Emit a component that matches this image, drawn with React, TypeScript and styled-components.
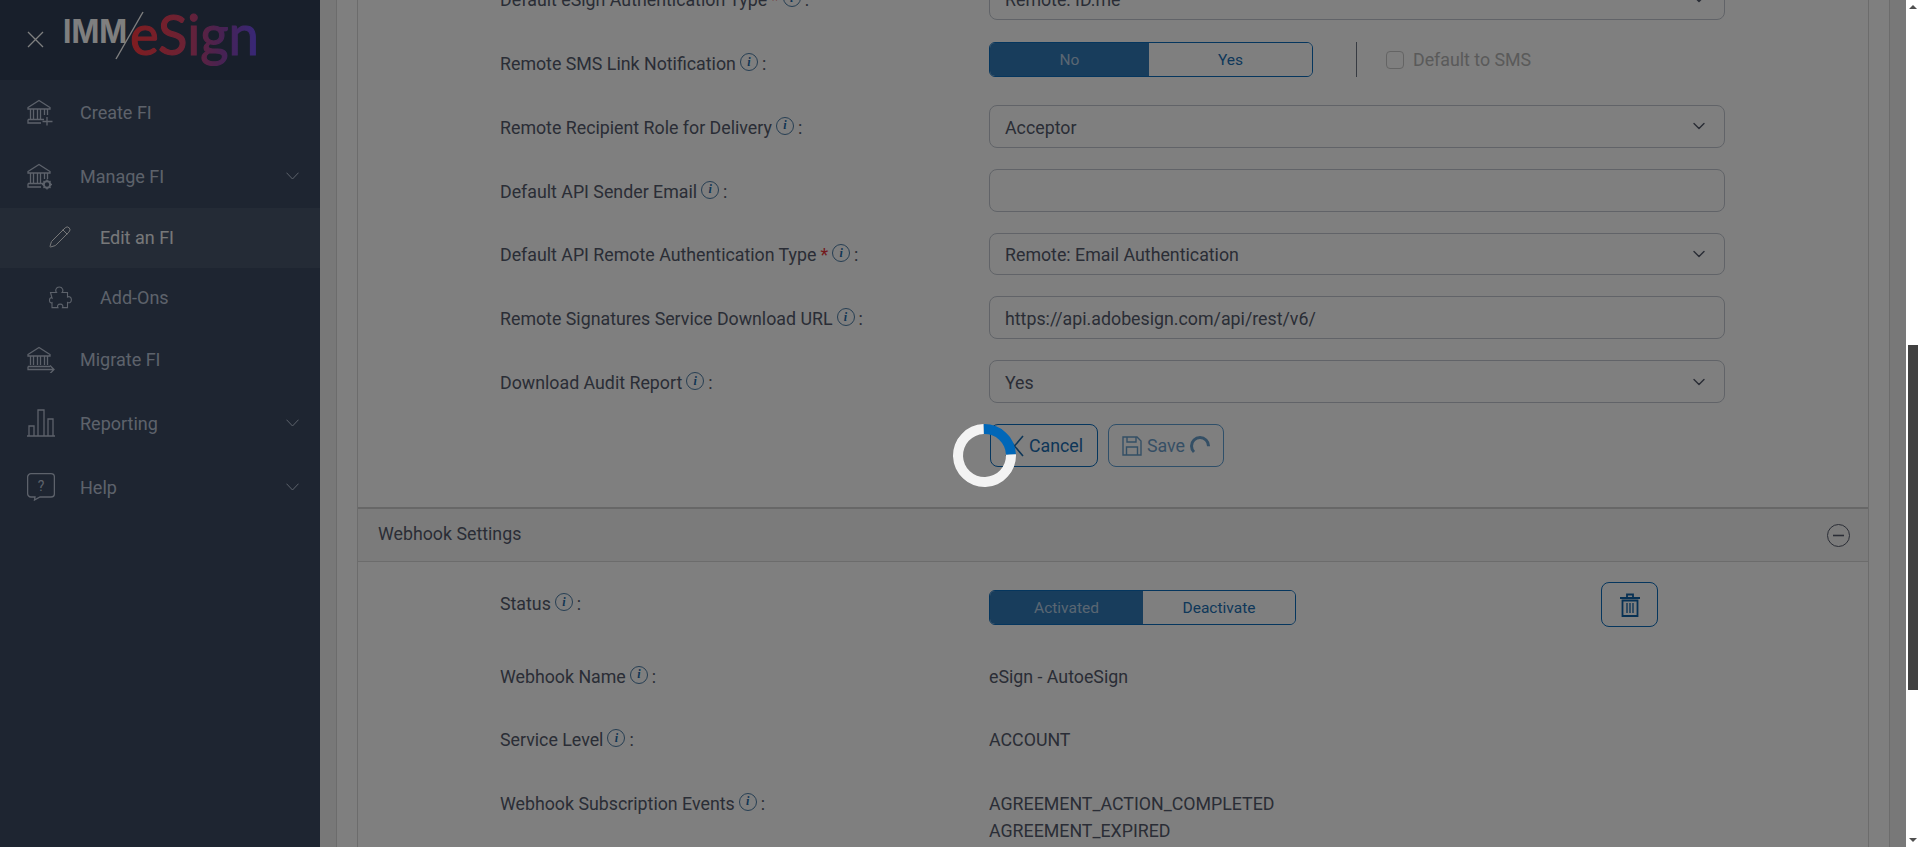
import React from "react";
import styled, { createGlobalStyle } from "styled-components";
import { ChevronDown, Pencil } from "lucide-react";

const GlobalStyle = createGlobalStyle`
  html, body {
    margin: 0;
    height: 100%;
    overflow: hidden;
    background: #fff;
    font-family: Roboto, "Liberation Sans", sans-serif;
  }
`;

const Page = styled.div`
  position: relative;
  display: flex;
  height: 847px;
  overflow: hidden;
`;

const Overlay = styled.div`
  position: absolute;
  inset: 0 14px 0 0;
  background: rgba(0, 0, 0, 0.5);
`;

const Loader = styled.div`
  position: absolute;
  left: 953px;
  top: 424px;
  width: 63px;
  height: 63px;
  box-sizing: border-box;
  border: 10px solid #f3f3f3;
  border-top-color: #0067b8;
  border-radius: 50%;
  transform: rotate(43deg);
`;

/* sidebar */
const Sidebar = styled.nav`
  flex: 0 0 320px;
  background: #3c4a62;
  color: #bac4d6;
  font-size: 18px;
`;

const Brand = styled.div`
  display: flex;
  align-items: center;
  gap: 19px;
  height: 80px;
  padding-left: 27px;
  background: #303f57;
  color: #fff;
`;

const CloseWrap = styled.span`
  display: flex;
  margin-bottom: 2px;
`;

const NavItem = styled.div<{ $sub?: boolean; $selected?: boolean; $height: number }>`
  display: flex;
  align-items: center;
  box-sizing: border-box;
  height: ${(p) => p.$height}px;
  padding: 0 21px ${(p) => (p.$selected ? 2 : 0)}px ${(p) => (p.$sub ? 49 : 27)}px;
  background: ${(p) => (p.$selected ? "#48566c" : "transparent")};
  color: ${(p) => (p.$selected ? "#eef0f3" : "inherit")};
`;

const NavIcon = styled.span<{ $sub?: boolean }>`
  display: flex;
  width: ${(p) => (p.$sub ? 51 : 53)}px;
`;

const NavLabel = styled.span`
  flex: 1;
`;

/* content */
const Main = styled.main`
  flex: 1;
  min-width: 0;
  padding: 0 16px;
  background: #f0f0f0;
`;

const Outer = styled.div`
  height: 100%;
  padding: 0 20px;
  background: #fff;
  border: solid #d8d8d8;
  border-width: 0 1px;
`;

const Panel = styled.div`
  display: flow-root;
  height: 100%;
  background: #fefefe;
  border: solid #d8d8d8;
  border-width: 0 1px;
  color: #555b6c;
  font-size: 17.8px;
`;

const Form = styled.div`
  display: flex;
  flex-direction: column;
  gap: 21px;
  margin-top: -22.6px;
  padding-left: 142px;
`;

const Label = styled.div`
  display: flex;
  align-items: center;
  line-height: 27px;
`;

const Row = styled.div`
  display: grid;
  grid-template-columns: 489px 736px;
  align-items: center;
  height: 42.8px;
  ${Label} {
    padding-top: 2px;
  }
`;

const Required = styled.span`
  margin-left: 4px;
  color: #e8353a;
`;

const InfoBadge = styled.span`
  display: inline-flex;
  align-items: center;
  justify-content: center;
  box-sizing: border-box;
  width: 18px;
  height: 18px;
  margin: -3px 0 0 4px;
  border: 1px solid #4d7da6;
  border-radius: 50%;
  color: #1f6aa8;
  font: italic 700 12px "Liberation Serif", serif;
`;

const Colon = styled.span`
  margin-left: 4px;
`;

const Field = styled.div`
  display: flex;
  align-items: center;
  justify-content: space-between;
  box-sizing: border-box;
  height: 100%;
  padding: 2px 15px 0 15px;
  background: #fff;
  border: 1px solid #c2c7d0;
  border-radius: 8px;
  color: #555b6c;
  svg {
    margin-top: -2px;
    color: #555b6c;
  }
`;

const ToggleLine = styled.div`
  display: flex;
  align-items: center;
  margin-top: -6px;
`;

const Toggle = styled.div<{ $first: number; $second: number }>`
  display: grid;
  grid-template-columns: ${(p) => p.$first}px ${(p) => p.$second}px;
  box-sizing: border-box;
  height: 35px;
  border: 1px solid #0a6cbd;
  border-radius: 6px;
  overflow: hidden;
`;

const ToggleOption = styled.div<{ $on?: boolean }>`
  display: flex;
  align-items: center;
  justify-content: center;
  background: ${(p) => (p.$on ? "#307ab9" : "#fff")};
  color: ${(p) => (p.$on ? "#b4cde4" : "#2070b4")};
  font-size: 15.5px;
`;

const Divider = styled.span`
  width: 1px;
  height: 35px;
  margin: 0 29px 0 43px;
  background: #6f7785;
`;

const DefaultCheck = styled.label`
  display: flex;
  align-items: center;
  gap: 9px;
  color: #b4b4b4;
`;

const CheckBox = styled.span`
  box-sizing: border-box;
  width: 18px;
  height: 18px;
  border: 1px solid #c8c8c8;
  border-radius: 4px;
`;

const Actions = styled.div`
  display: flex;
  gap: 10px;
  margin-left: 1px;
`;

const ActionButton = styled.div<{ $width: number; $disabled?: boolean }>`
  display: flex;
  align-items: center;
  justify-content: center;
  gap: 5px;
  box-sizing: border-box;
  width: ${(p) => p.$width}px;
  height: 43px;
  padding-top: 1px;
  border: 1px solid #0a6cbd;
  border-radius: 8px;
  color: #1a6cb0;
  font-size: 17.8px;
  opacity: ${(p) => (p.$disabled ? 0.65 : 1)};
`;

const SectionHeader = styled.div`
  display: flex;
  align-items: center;
  justify-content: space-between;
  box-sizing: border-box;
  height: 55px;
  margin-top: 40.6px;
  padding: 0 18px 3px 20px;
  background: #f7f7f7;
  border-top: 2px solid #cfcfcf;
  border-bottom: 1px solid #d8d8d8;
  color: #555b6c;
`;

const Collapse = styled.span`
  display: flex;
  margin-bottom: -3px;
  color: #555b6c;
`;

const Details = styled.div`
  padding-left: 142px;
`;

const StatusRow = styled.div`
  display: grid;
  grid-template-columns: 489px 736px;
  height: 44px;
  margin-top: 20px;
`;

const StatusLabel = styled(Label)`
  padding-top: 8px;
  align-self: start;
`;

const StatusControls = styled.div`
  display: flex;
  align-items: flex-start;
`;

const StatusToggle = styled(Toggle)`
  margin: 8px 305px 0 0;
`;

const TrashButton = styled.div`
  display: flex;
  flex: none;
  align-items: center;
  justify-content: center;
  box-sizing: border-box;
  width: 57px;
  height: 45px;
  border: 1px solid #0a6cbd;
  border-radius: 8px;
  color: #0f62a8;
`;

const ValueRow = styled.div`
  display: grid;
  grid-template-columns: 489px 736px;
  align-items: start;
  margin-top: 36.5px;
  line-height: 27px;
`;

/* fake scroll rail: the reference is a scrolled window */
const Rail = styled.div`
  position: relative;
  flex: 0 0 14px;
  background: #fff;
`;

const RailArrow = styled.span<{ $down?: boolean }>`
  position: absolute;
  left: 3px;
  ${(p) => (p.$down ? "bottom: 5px;" : "top: 5px;")}
  border: 4px solid transparent;
  border-width: ${(p) => (p.$down ? "4px 4px 0" : "0 4px 4px")};
  border-${(p) => (p.$down ? "top" : "bottom")}-color: #505050;
`;

const RailThumb = styled.div`
  width: 10px;
  height: 345px;
  margin: 345px 0 0 2px;
  background: #414141;
`;

const PencilWrap = styled.span`
  display: flex;
  margin: 0 0 0 -1px;
`;

const Line = (props: React.SVGProps<SVGSVGElement>) => (
  <svg
    width={26}
    height={27}
    viewBox="0 0 26 27"
    fill="none"
    stroke="currentColor"
    strokeWidth={1.3}
    {...props}
  />
);

const BankBase = () => (
  <>
    <path d="M1 8.500 12 1.500l11 7v1.500H1z" />
    <path d="M3.500 10v10M6.500 10v10M10.500 10v10M13.500 10v10M17.500 10v6M20.500 10v6" />
    <path d="M1 20.500h16M1 20.500v3.500h13" />
  </>
);

const BankPlusIcon = () => (
  <Line>
    <BankBase />
    <path d="M20 18v8.500M15.500 22.500h10" />
  </Line>
);

const BankGearIcon = () => (
  <Line>
    <BankBase />
    <circle cx={20} cy={21.5} r={3.2} strokeWidth={2} />
    <path d="M20 16.500v1.500M20 25v1.500M15 21.500h1.500M23.500 21.500H25M16.500 18l1 1M22.500 24l1 1M23.500 18l-1 1M17.500 24l-1 1" />
  </Line>
);

const BankArrowIcon = () => (
  <Line width={28} viewBox="0 0 28 27">
    <path d="M1 8.500 12 1.500l11 7v1.500H1z" />
    <path d="M3.500 10v9M6.500 10v9M10.500 10v9M13.500 10v9M17.500 10v9M20.500 10v9" />
    <path d="M1 20.500h22M1 20.500v3h26M23 19.500l4 4-4 4" />
  </Line>
);

const ChartIcon = () => (
  <Line width={28} height={28} viewBox="0 0 28 28">
    <path d="M0 27h28M2 27V17h5v10M11 27V1h6v26M21 27V10h5v17" />
  </Line>
);

const HelpIcon = () => (
  <Line width={28} height={28} viewBox="0 0 28 28">
    <path d="M4 .7h20a3.400 3.400 0 0 1 3.400 3.400v16.500a3.400 3.400 0 0 1-3.400 3.400H13l-5.500 3 .5-3H4a3.400 3.400 0 0 1-3.400-3.400V4.100A3.400 3.400 0 0 1 4 .7z" />
    <text x={14} y={18} textAnchor="middle" fontSize={14} fill="currentColor" stroke="none" fontFamily="Roboto, sans-serif">
      ?
    </text>
  </Line>
);

const PuzzleIcon = () => (
  <svg width={23} height={23} viewBox="0 0 23 23" fill="none" stroke="currentColor" strokeWidth={1.1}>
    <path d="M1.500 6.500H7.500C6 4.800 6.800 1 10.300 1s4.300 3.800 2.800 5.500h5.400V11c1.700-1 3.900 0 3.900 2.700s-2.200 3.700-3.900 2.700v5.200h-5c.8-1.500.2-3.500-2.300-3.500s-3.100 2-2.300 3.500H3v-5c-1 .6-2.500.1-2.500-2.300S2 11.300 3 12z" />
  </svg>
);

const ThinChevron = () => (
  <svg width={13} height={8} viewBox="0 0 13 8" fill="none" stroke="currentColor">
    <path d="M.5.7 6.500 7l6-6.300" />
  </svg>
);

const CloseIcon = () => (
  <svg width={17} height={17} viewBox="0 0 17 17" stroke="currentColor" strokeWidth={1.3}>
    <path d="M1 1l15 15M16 1 1 16" />
  </svg>
);

const Logo = () => (
  <svg width={210} height={80} viewBox="0 0 210 80">
    <defs>
      <linearGradient id="esign-fade" gradientUnits="userSpaceOnUse" x1="67" x2="194" y1="0" y2="0">
        <stop offset="0" stopColor="#ff3a40" />
        <stop offset="0.42" stopColor="#d84468" />
        <stop offset="0.72" stopColor="#9044a4" />
        <stop offset="1" stopColor="#7050f0" />
      </linearGradient>
    </defs>
    <text x={0} y={43} fill="#fff" fontFamily="Inter, sans-serif" fontWeight={700} fontSize={32} textLength={64} lengthAdjust="spacingAndGlyphs">
      IMM
    </text>
    <path d="M53 59 80 12" stroke="#fff" strokeWidth={1.4} />
    <text x={67} y={55} fill="url(#esign-fade)" stroke="url(#esign-fade)" strokeWidth={1.1} fontFamily="Lato, sans-serif" fontWeight={400} fontSize={56} textLength={129} lengthAdjust="spacingAndGlyphs">
      eSign
    </text>
  </svg>
);

const SaveIcon = () => (
  <svg width={20} height={20} viewBox="0 0 20 20" fill="none" stroke="currentColor" strokeWidth={1.4}>
    <path d="M1 1h14l4 4v14H1z" />
    <path d="M5 1v5h9V1M4.500 19v-8h11v8" />
  </svg>
);

const CancelIcon = () => (
  <svg width={19} height={22} viewBox="0 0 19 22" stroke="currentColor" strokeWidth={1.6}>
    <path d="M1 1l17 20M18 1 1 21" />
  </svg>
);

const MiniSpinner = () => (
  <svg width={20} height={20} viewBox="0 0 20 20" fill="none" stroke="currentColor" strokeWidth={3}>
    <circle cx={10} cy={10} r={8.5} strokeDasharray="33.4 53.4" transform="rotate(135 10 10)" />
  </svg>
);

const TrashIcon = () => (
  <svg width={20} height={24} viewBox="0 0 20 24" fill="none" stroke="currentColor" strokeWidth={1.8}>
    <path d="M0 5h20M7 5V1.500h6V5" />
    <path d="M2.500 7.500v15.500h15V7.500h-15z" />
    <path d="M7 10v10M10 10v10M13 10v10" strokeWidth={1.3} />
  </svg>
);

const MinusCircle = () => (
  <svg width={23} height={23} viewBox="0 0 23 23" fill="none" stroke="currentColor">
    <circle cx={11.5} cy={11.5} r={11} />
    <path d="M6 11.500h11" strokeWidth={1.6} />
  </svg>
);

const RowLabel = ({ text, required }: { text: string; required?: boolean }) => (
  <Label>
    {text}
    {required && <Required>*</Required>}
    <InfoBadge>i</InfoBadge>
    <Colon>:</Colon>
  </Label>
);

const SelectField = ({ value }: { value: string }) => (
  <Field>
    {value}
    <ChevronDown size={20} strokeWidth={1.7} />
  </Field>
);

const navItems = [
  { label: "Create FI", icon: <BankPlusIcon />, height: 64 },
  { label: "Manage FI", icon: <BankGearIcon />, height: 64, chevron: true },
  {
    label: "Edit an FI",
    icon: (
      <PencilWrap>
        <Pencil size={24} strokeWidth={1} />
      </PencilWrap>
    ),
    height: 60,
    sub: true,
    selected: true,
  },
  { label: "Add-Ons", icon: <PuzzleIcon />, height: 59, sub: true },
  { label: "Migrate FI", icon: <BankArrowIcon />, height: 64 },
  { label: "Reporting", icon: <ChartIcon />, height: 64, chevron: true },
  { label: "Help", icon: <HelpIcon />, height: 64, chevron: true },
];

const App = () => {
  return (
    <Page>
      <GlobalStyle />
      <Sidebar>
        <Brand>
          <CloseWrap>
            <CloseIcon />
          </CloseWrap>
          <Logo />
        </Brand>
        {navItems.map((item) => (
          <NavItem key={item.label} $sub={item.sub} $selected={item.selected} $height={item.height}>
            <NavIcon $sub={item.sub}>{item.icon}</NavIcon>
            <NavLabel>{item.label}</NavLabel>
            {item.chevron && <ThinChevron />}
          </NavItem>
        ))}
      </Sidebar>

      <Main>
        <Outer>
          <Panel>
            <Form>
              <Row>
                <RowLabel text="Default eSign Authentication Type" required />
                <SelectField value="Remote: ID.me" />
              </Row>
              <Row>
                <RowLabel text="Remote SMS Link Notification" />
                <ToggleLine>
                  <Toggle $first={159} $second={163}>
                    <ToggleOption $on>No</ToggleOption>
                    <ToggleOption>Yes</ToggleOption>
                  </Toggle>
                  <Divider />
                  <DefaultCheck>
                    <CheckBox />
                    Default to SMS
                  </DefaultCheck>
                </ToggleLine>
              </Row>
              <Row>
                <RowLabel text="Remote Recipient Role for Delivery" />
                <SelectField value="Acceptor" />
              </Row>
              <Row>
                <RowLabel text="Default API Sender Email" />
                <Field />
              </Row>
              <Row>
                <RowLabel text="Default API Remote Authentication Type" required />
                <SelectField value="Remote: Email Authentication" />
              </Row>
              <Row>
                <RowLabel text="Remote Signatures Service Download URL" />
                <Field>https://api.adobesign.com/api/rest/v6/</Field>
              </Row>
              <Row>
                <RowLabel text="Download Audit Report" />
                <SelectField value="Yes" />
              </Row>
              <Row>
                <span />
                <Actions>
                  <ActionButton $width={108}>
                    <CancelIcon />
                    Cancel
                  </ActionButton>
                  <ActionButton $width={116} $disabled>
                    <SaveIcon />
                    Save
                    <MiniSpinner />
                  </ActionButton>
                </Actions>
              </Row>
            </Form>

            <SectionHeader>
              Webhook Settings
              <Collapse>
                <MinusCircle />
              </Collapse>
            </SectionHeader>

            <Details>
              <StatusRow>
                <StatusLabel>
                  Status
                  <InfoBadge>i</InfoBadge>
                  <Colon>:</Colon>
                </StatusLabel>
                <StatusControls>
                  <StatusToggle $first={153} $second={152}>
                    <ToggleOption $on>Activated</ToggleOption>
                    <ToggleOption>Deactivate</ToggleOption>
                  </StatusToggle>
                  <TrashButton>
                    <TrashIcon />
                  </TrashButton>
                </StatusControls>
              </StatusRow>
              <ValueRow>
                <RowLabel text="Webhook Name" />
                <div>eSign - AutoeSign</div>
              </ValueRow>
              <ValueRow>
                <RowLabel text="Service Level" />
                <div>ACCOUNT</div>
              </ValueRow>
              <ValueRow>
                <RowLabel text="Webhook Subscription Events" />
                <div>
                  AGREEMENT_ACTION_COMPLETED
                  <br />
                  AGREEMENT_EXPIRED
                </div>
              </ValueRow>
            </Details>
          </Panel>
        </Outer>
      </Main>

      <Rail>
        <RailArrow />
        <RailThumb />
        <RailArrow $down />
      </Rail>

      <Overlay />
      <Loader />
    </Page>
  );
};

export default App;
